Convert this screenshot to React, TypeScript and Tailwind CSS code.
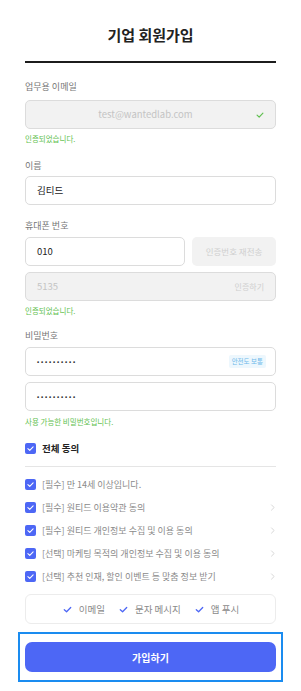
const font = { fontFamily: '"Noto Sans CJK KR", "Noto Sans", sans-serif' };

function Check({ className }: { className?: string }) {
  return (
    <svg viewBox="0 0 12 12" className={className} fill="none" stroke="currentColor" strokeWidth="1.4" strokeLinecap="round" strokeLinejoin="round">
      <path d="M2.5 6.2 5 8.5 9.5 3.8" />
    </svg>
  );
}

function Box() {
  return (
    <span className="flex h-[11px] w-[11px] shrink-0 items-center justify-center rounded-[2px] bg-[#4d67f5] text-white">
      <Check className="h-[9px] w-[9px]" />
    </span>
  );
}

function Chevron() {
  return (
    <svg viewBox="0 0 8 10" className="h-[9px] w-[6px] text-[#c9c9c9]" fill="none" stroke="currentColor" strokeWidth="1" strokeLinecap="round">
      <path d="M2 1.5 5.5 5 2 8.5" />
    </svg>
  );
}

const terms = [
  { text: "[필수] 만 14세 이상입니다.", more: false },
  { text: "[필수] 원티드 이용약관 동의", more: true },
  { text: "[필수] 원티드 개인정보 수집 및 이용 동의", more: true },
  { text: "[선택] 마케팅 목적의 개인정보 수집 및 이용 동의", more: true },
  { text: "[선택] 추천 인재, 할인 이벤트 등 맞춤 정보 받기", more: true },
];

export default function App() {
  return (
    <div style={font} className="min-h-[691px] w-[301px] bg-white">
      <div className="px-[25px] pt-[26px]">
        <h1 className="text-center text-[15px] font-bold leading-[18px] text-[#222]">기업 회원가입</h1>
        <div className="mt-[17px] h-[2px] bg-[#1c1c1c]" />

        <p className="mt-[18px] text-[9px] leading-[12px] text-[#767676]">업무용 이메일</p>
        <div className="mt-[7px] flex h-[29px] items-center rounded-[5px] border border-[#dcdcdc] bg-[#f2f2f2] px-[10px]">
          <span className="flex-1 text-center text-[9.5px] text-[#c4c4c4]">test@wantedlab.com</span>
          <Check className="h-[10px] w-[10px] text-[#5fbf4f]" />
        </div>
        <p className="mt-[4px] text-[7.5px] leading-[12px] text-[#5fbf4f]">인증되었습니다.</p>

        <p className="mt-[15px] text-[9px] leading-[12px] text-[#767676]">이름</p>
        <div className="mt-[4px] flex h-[29px] items-center rounded-[5px] border border-[#dcdcdc] px-[11px]">
          <span className="text-[9.5px] text-[#222]">김티드</span>
        </div>

        <p className="mt-[15px] text-[9px] leading-[12px] text-[#767676]">휴대폰 번호</p>
        <div className="mt-[5px] flex h-[29px] gap-[7px]">
          <div className="flex flex-1 items-center rounded-[5px] border border-[#dcdcdc] px-[11px]">
            <span className="text-[9.5px] text-[#222]">010</span>
          </div>
          <div className="flex w-[84px] items-center justify-center rounded-[5px] bg-[#f2f2f2]">
            <span className="text-[8.5px] text-[#cfcfcf]">인증번호 재전송</span>
          </div>
        </div>
        <div className="mt-[6px] flex h-[29px] items-center justify-between rounded-[5px] border border-[#dcdcdc] bg-[#f2f2f2] px-[11px]">
          <span className="text-[9.5px] text-[#c4c4c4]">5135</span>
          <span className="text-[8px] text-[#cfcfcf]">인증하기</span>
        </div>
        <p className="mt-[4px] text-[7.5px] leading-[12px] text-[#5fbf4f]">인증되었습니다.</p>

        <p className="mt-[13px] text-[9px] leading-[12px] text-[#767676]">비밀번호</p>
        <div className="mt-[5px] flex h-[29px] items-center justify-between rounded-[5px] border border-[#dcdcdc] pl-[11px] pr-[9px]">
          <span className="text-[6.5px] tracking-[1.8px] text-[#333]">••••••••••</span>
          <span className="rounded-[2px] bg-[#edf7fd] px-[3px] py-[2px] text-[6.5px] leading-[9px] text-[#6cb8ea]">안전도 보통</span>
        </div>
        <div className="mt-[6px] flex h-[29px] items-center rounded-[5px] border border-[#dcdcdc] px-[11px]">
          <span className="text-[6.5px] tracking-[1.8px] text-[#333]">••••••••••</span>
        </div>
        <p className="mt-[5px] text-[7.5px] leading-[12px] text-[#5fbf4f]">사용 가능한 비밀번호입니다.</p>

        <div className="mt-[14px] flex items-center gap-[6px]">
          <Box />
          <span className="text-[9.5px] font-bold leading-[12px] text-[#222]">전체 동의</span>
        </div>
        <div className="mt-[12px] h-px bg-[#e5e5e5]" />

        <div className="mt-[11px] flex flex-col gap-[10px]">
          {terms.map((t) => (
            <div key={t.text} className="flex h-[13px] items-center gap-[6px]">
              <Box />
              <span className="flex-1 text-[9px] leading-[12px] text-[#8a8a8a]">{t.text}</span>
              {t.more && <Chevron />}
            </div>
          ))}
        </div>

        <div className="mt-[11px] flex h-[30px] items-center justify-center gap-[13px] rounded-[6px] border border-[#ececec]">
          {["이메일", "문자 메시지", "앱 푸시"].map((c) => (
            <span key={c} className="flex items-center gap-[6px] text-[9.5px] text-[#8a8a8a]">
              <Check className="h-[11px] w-[11px] text-[#4d67f5]" />
              {c}
            </span>
          ))}
        </div>
      </div>

      <div className="mx-[18px] mt-[8px] border-2 border-[#1a8cf0] px-[5px] py-[8px]">
        <button className="flex h-[30px] w-full items-center justify-center rounded-[7px] bg-[#4d67f5] text-[10px] font-bold text-white">
          가입하기
        </button>
      </div>
    </div>
  );
}
